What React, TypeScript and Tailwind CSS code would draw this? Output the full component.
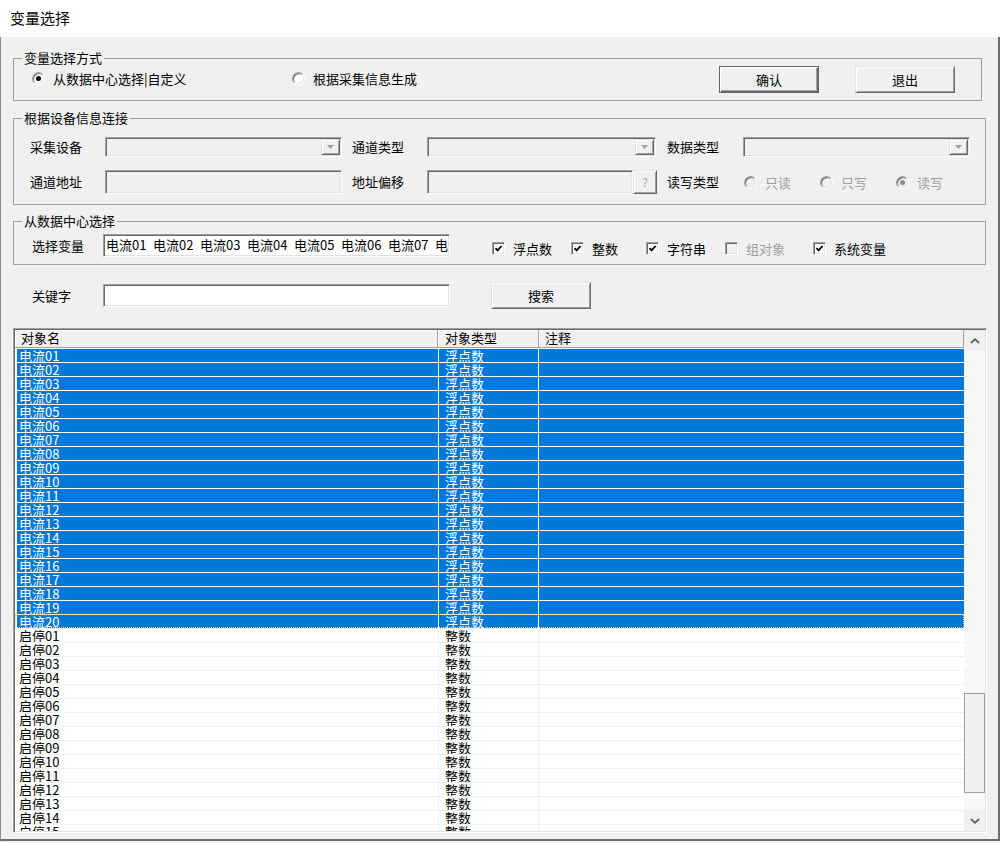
import React from 'react';

const SUNKEN =
  'border border-t-[#a0a0a0] border-l-[#a0a0a0] border-r-white border-b-white shadow-[inset_1px_1px_0_#696969,inset_-1px_-1px_0_#e3e3e3]';
const RAISED =
  'border border-t-[#e3e3e3] border-l-[#e3e3e3] border-r-[#696969] border-b-[#696969] shadow-[inset_1px_1px_0_#fff,inset_-1px_-1px_0_#a0a0a0]';

function Radio({ checked, disabled, label }: { checked?: boolean; disabled?: boolean; label: string }) {
  return (
    <div className="flex items-center">
      <span
        className={`flex h-[13px] w-[13px] items-center justify-center rounded-full border border-t-[#a0a0a0] border-l-[#a0a0a0] border-r-white border-b-white shadow-[inset_1px_1px_0_#696969,inset_-1px_-1px_0_#e3e3e3] ${
          disabled ? 'bg-[#f0f0f0]' : 'bg-white'
        }`}
      >
        {checked && (
          <span className={`h-[5px] w-[5px] rounded-full ${disabled ? 'bg-[#8a8a8a]' : 'bg-black'}`} />
        )}
      </span>
      <span className={`ml-[8px] leading-[13px] ${disabled ? 'text-[#a0a0a0]' : 'text-black'}`}>{label}</span>
    </div>
  );
}

function Check({ checked, disabled, label }: { checked?: boolean; disabled?: boolean; label: string }) {
  return (
    <div className="flex items-center">
      <span
        className={`flex h-[13px] w-[13px] items-center justify-center ${SUNKEN} ${
          disabled ? 'bg-[#f0f0f0]' : 'bg-white'
        }`}
      >
        {checked && (
          <svg width="9" height="9" viewBox="0 0 9 9">
            <path d="M1.5 4.2 L3.6 6.4 L7.6 2" fill="none" stroke="#000" strokeWidth="1.8" />
          </svg>
        )}
      </span>
      <span className={`ml-[8px] leading-[13px] ${disabled ? 'text-[#a0a0a0]' : 'text-black'}`}>{label}</span>
    </div>
  );
}

function Combo({ width }: { width: string }) {
  return (
    <div className={`flex h-[20px] justify-end bg-[#f0f0f0] p-[1px] ${SUNKEN} ${width}`}>
      <div className={`flex w-[19px] items-center justify-center bg-[#f0f0f0] ${RAISED}`}>
        <svg width="7" height="4" viewBox="0 0 7 4">
          <path d="M0 0H7L3.5 4Z" fill="#a0a0a0" />
        </svg>
      </div>
    </div>
  );
}

function Chevron({ up }: { up?: boolean }) {
  return (
    <svg width="10" height="6" viewBox="0 0 10 6">
      <path
        d={up ? 'M1 5 L5 1.2 L9 5' : 'M1 1 L5 4.8 L9 1'}
        fill="none"
        stroke="#606060"
        strokeWidth="1.8"
      />
    </svg>
  );
}

const rows = [
  ...Array.from({ length: 20 }, (_, i) => ({
    name: `电流${String(i + 1).padStart(2, '0')}`,
    type: '浮点数',
    sel: true,
  })),
  ...Array.from({ length: 15 }, (_, i) => ({
    name: `启停${String(i + 1).padStart(2, '0')}`,
    type: '整数',
    sel: false,
  })),
];

const picked = ['电流01', '电流02', '电流03', '电流04', '电流05', '电流06', '电流07', '电流08'];

export default function App() {
  return (
    <div className="h-[843px] w-[1000px] overflow-hidden bg-[#f0f0f0] font-['Noto_Sans_CJK_SC','Noto_Sans',sans-serif] text-[13px] text-black">
      {/* Title */}
      <div className="flex h-[37px] items-center bg-white pl-[10px] text-[15px]">变量选择</div>

      <div className="flex h-[804px] flex-col border-l border-r-2 border-b-2 border-l-[#8c8c8c] border-r-[#6e6e6e] border-b-[#6e6e6e] pl-[12px]">
        {/* 变量选择方式 */}
        <fieldset className="mt-[14px] w-[969px] border border-[#a0a0a0]">
          <legend className="ml-[8px] px-[2px] leading-[14px]">变量选择方式</legend>
          <div className="mt-[1px] mb-[7px] flex h-[27px] items-start pl-[18px] pr-[26px]">
            <div className="mt-[6px] w-[260px]">
              <Radio checked label="从数据中心选择|自定义" />
            </div>
            <div className="mt-[6px]">
              <Radio label="根据采集信息生成" />
            </div>
            <button className="ml-auto flex h-[27px] w-[100px] items-center justify-center bg-[#f0f0f0] border border-[#646464] shadow-[inset_1px_1px_0_#fff,inset_-1px_-1px_0_#696969,inset_-2px_-2px_0_#a0a0a0]">
              确认
            </button>
            <button className={`ml-[36px] flex h-[27px] w-[100px] items-center justify-center bg-[#f0f0f0] ${RAISED}`}>
              退出
            </button>
          </div>
        </fieldset>

        {/* 根据设备信息连接 */}
        <fieldset className="mt-[10px] w-[973px] border border-[#a0a0a0]">
          <legend className="ml-[8px] px-[2px] leading-[14px]">根据设备信息连接</legend>
          <div className="mt-[12px] flex h-[20px] items-center pl-[16px]">
            <span className="w-[75px]">采集设备</span>
            <Combo width="w-[237px]" />
            <span className="ml-[10px] w-[75px]">通道类型</span>
            <Combo width="w-[229px]" />
            <span className="ml-[11px] w-[76px]">数据类型</span>
            <Combo width="w-[227px]" />
          </div>
          <div className="mb-[10px] mt-[13px] flex h-[24px] items-center pl-[16px]">
            <span className="w-[75px]">通道地址</span>
            <div className={`h-[24px] w-[237px] bg-[#f0f0f0] ${SUNKEN}`} />
            <span className="ml-[10px] w-[75px]">地址偏移</span>
            <div className={`h-[24px] w-[206px] bg-[#f0f0f0] ${SUNKEN}`} />
            <div className={`flex h-[24px] w-[24px] items-center justify-center bg-[#f0f0f0] text-[12px] text-[#a0a0a0] ${RAISED}`}>
              ?
            </div>
            <span className="ml-[10px] w-[77px]">读写类型</span>
            <div className="w-[76px]">
              <Radio disabled label="只读" />
            </div>
            <div className="w-[76px]">
              <Radio disabled label="只写" />
            </div>
            <Radio disabled checked label="读写" />
          </div>
        </fieldset>

        {/* 从数据中心选择 */}
        <fieldset className="mt-[9px] w-[973px] border border-[#a0a0a0]">
          <legend className="ml-[8px] px-[2px] leading-[14px]">从数据中心选择</legend>
          <div className="mb-[7px] mt-[6px] flex h-[23px] items-start pl-[18px]">
            <span className="flex h-[23px] w-[71px] items-center">选择变量</span>
            <div className={`flex h-[23px] w-[347px] overflow-hidden whitespace-nowrap bg-white pl-[2px] pt-[3px] leading-[13px] ${SUNKEN}`}>
              {picked.map((p) => (
                <span key={p} className="inline-block w-[47px] shrink-0">
                  {p}
                </span>
              ))}
            </div>
            <div className="ml-[42px] mt-[8px] flex h-[13px] items-center">
              <div className="w-[79px]">
                <Check checked label="浮点数" />
              </div>
              <div className="w-[75px]">
                <Check checked label="整数" />
              </div>
              <div className="w-[79px]">
                <Check checked label="字符串" />
              </div>
              <div className="w-[88px]">
                <Check disabled label="组对象" />
              </div>
              <Check checked label="系统变量" />
            </div>
          </div>
        </fieldset>

        {/* 关键字 */}
        <div className="mt-[17px] flex h-[27px] items-center pl-[19px]">
          <span className="w-[71px]">关键字</span>
          <div className={`h-[23px] w-[347px] bg-white ${SUNKEN}`} />
          <button className={`ml-[41px] flex h-[27px] w-[100px] items-center justify-center bg-[#f0f0f0] ${RAISED}`}>
            搜索
          </button>
        </div>

        {/* List */}
        <div className={`mt-[19px] flex h-[505px] w-[974px] bg-white p-[1px] ${SUNKEN}`}>
          <div className="flex w-[949px] flex-col overflow-hidden">
            <div className="flex h-[18px] shrink-0 leading-[16px]">
              <div className="w-[423px] border-r border-b border-[#a0a0a0] bg-[#f0f0f0] pl-[6px] shadow-[inset_1px_1px_0_#fff]">
                对象名
              </div>
              <div className="w-[101px] border-r border-b border-[#a0a0a0] bg-[#f0f0f0] pl-[7px] shadow-[inset_1px_1px_0_#fff]">
                对象类型
              </div>
              <div className="w-[425px] border-r border-b border-[#a0a0a0] bg-[#f0f0f0] pl-[6px] shadow-[inset_1px_1px_0_#fff]">
                注释
              </div>
            </div>
            {rows.map((r, i) => (
              <div
                key={r.name}
                className={`flex h-[14px] shrink-0 border-t leading-[13px] ${
                  r.sel ? 'border-white text-white' : 'border-[#f0f0f0] text-black'
                } ${i === 19 ? 'outline outline-1 outline-dotted -outline-offset-1 outline-[#f3c98b]' : ''}`}
              >
                <div className="w-[2px] bg-white" />
                <div className={`w-[421px] pl-[2px] ${r.sel ? 'bg-[#0078d7]' : 'bg-white'}`}>{r.name}</div>
                <div className={`w-[1px] ${r.sel ? 'bg-white' : 'bg-[#f0f0f0]'}`} />
                <div className={`w-[99px] pl-[6px] ${r.sel ? 'bg-[#0078d7]' : 'bg-white'}`}>{r.type}</div>
                <div className={`w-[1px] ${r.sel ? 'bg-white' : 'bg-[#f0f0f0]'}`} />
                <div className={`w-[425px] ${r.sel ? 'bg-[#0078d7]' : 'bg-white'}`} />
              </div>
            ))}
          </div>

          {/* Scrollbar */}
          <div className="flex w-[21px] flex-col">
            <div className="flex h-[21px] shrink-0 items-center justify-center bg-[#f0f0f0]">
              <Chevron up />
            </div>
            <div className="flex-1 bg-[repeating-conic-gradient(#f0f0f0_0_25%,#ffffff_0_50%)] bg-[length:2px_2px] pt-[342px]">
              <div className="h-[100px] w-[21px] border border-[#a0a0a0] bg-[#f0f0f0]" />
            </div>
            <div className="flex h-[21px] shrink-0 items-center justify-center bg-[#f0f0f0]">
              <Chevron />
            </div>
          </div>
        </div>
      </div>
    </div>
  );
}
